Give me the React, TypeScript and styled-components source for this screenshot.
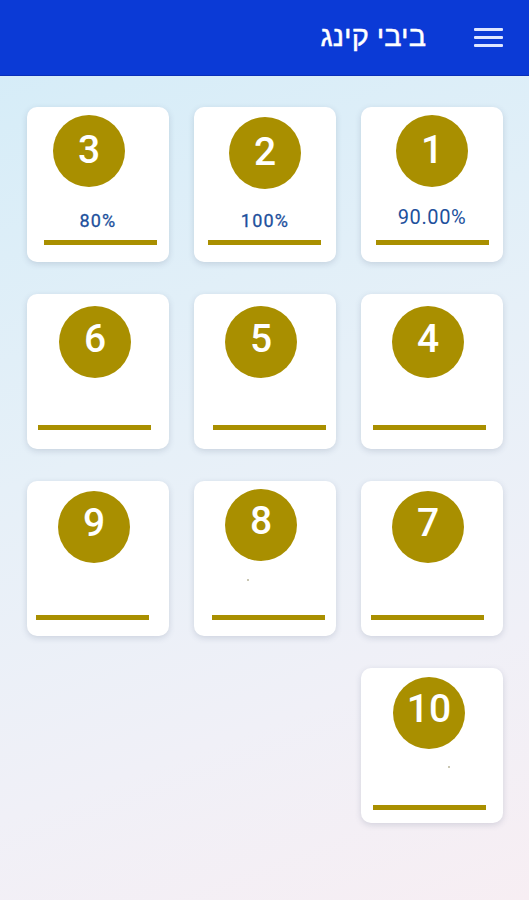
import React from "react";
import styled, { createGlobalStyle } from "styled-components";

type Level = {
  num: number;
  percent?: string;
  big?: boolean; // the first card shows its score larger
  dot?: number; // x of the stray dot inside the card, if any
  // small drift of circle / bar inside the card, as seen on the device
  cx: number;
  cy: number;
  bx: number;
  by: number;
  lift?: number;
};

const levels: Level[] = [
  { num: 1, percent: "90.00%", big: true, cx: 0, cy: 8, bx: 0, by: 133 },
  { num: 2, percent: "100%", cx: 0, cy: 10, bx: -1, by: 133 },
  { num: 3, percent: "80%", cx: -9, cy: 8, bx: 2, by: 133 },
  { num: 4, cx: -4, cy: 12, bx: -3, by: 131, lift: 2 },
  { num: 5, cx: -4, cy: 12, bx: 4, by: 131, lift: 2 },
  { num: 6, cx: -3, cy: 12, bx: -4, by: 131, lift: 2 },
  { num: 7, cx: -4, cy: 10, bx: -5, by: 134, lift: 3 },
  { num: 8, dot: 53, cx: -4, cy: 8, bx: 3, by: 134, lift: 3 },
  { num: 9, cx: -4, cy: 10, bx: -6, by: 134, lift: 3 },
  { num: 10, dot: 87, cx: -3, cy: 9, bx: -3, by: 137, lift: 3 },
];

const GlobalStyle = createGlobalStyle`
  html, body {
    margin: 0;
    padding: 0;
  }
  body {
    font-family: "Liberation Sans", "DejaVu Sans", sans-serif;
    background: #eef3f8;
  }
`;

const Page = styled.div`
  min-height: 900px;
  width: 529px;
  background: linear-gradient(160deg, #d3ecf8 0%, #e6f0f8 45%, #f0f0f7 75%, #f7eef3 100%);
`;

const Header = styled.header`
  height: 75px;
  background: #0b3ad6;
  border-bottom: 1px solid #0a2fb8;
  display: flex;
  align-items: center;
  justify-content: flex-end;
  gap: 48px;
  padding-right: 26px;
  direction: ltr;
`;

const Title = styled.h1`
  margin: 0 0 2px;
  font-family: "Liberation Sans", "DejaVu Sans", sans-serif;
  font-weight: normal;
  font-size: 29px;
  color: #ffffff;
  direction: rtl;
  -webkit-text-stroke: 0.4px #ffffff;
`;

const Burger = styled.div`
  width: 29px;
  display: flex;
  flex-direction: column;
  gap: 5px;
  margin-top: -1px;
`;

const BurgerLine = styled.span`
  display: block;
  height: 3px;
  background: #dfe6ff;
  border-radius: 1px;
`;

const Grid = styled.div`
  direction: rtl;
  display: grid;
  grid-template-columns: repeat(3, 142px);
  column-gap: 25px;
  row-gap: 32px;
  padding: 31px 26px 40px 27px;
`;

const Card = styled.div`
  position: relative;
  height: 155px;
  background: #ffffff;
  border-radius: 10px;
  box-shadow: 0 2px 6px rgba(60, 80, 110, 0.18);
  direction: ltr;
`;

const Circle = styled.div<{ $dx: number; $dy: number }>`
  position: absolute;
  left: calc(50% - 36px + ${(p) => p.$dx}px);
  top: ${(p) => p.$dy}px;
  width: 72px;
  height: 72px;
  border-radius: 50%;
  background: #a98f00;
  display: flex;
  align-items: center;
  justify-content: center;
`;

const Num = styled.span<{ $lift: number }>`
  color: #ffffff;
  font-family: Roboto, "Liberation Sans", sans-serif;
  font-weight: 500;
  font-size: 39px;
  line-height: 1;
  margin-top: ${(p) => -2 - p.$lift * 2}px;
`;

const Percent = styled.span<{ $big?: boolean }>`
  position: absolute;
  left: 0;
  right: 0;
  top: ${(p) => (p.$big ? 98 : 103)}px;
  text-align: center;
  font-family: Roboto, sans-serif;
  font-size: ${(p) => (p.$big ? 20 : 18)}px;
  font-weight: 400;
  color: #21509c;
  letter-spacing: ${(p) => (p.$big ? 0.6 : 1.2)}px;
  -webkit-text-stroke: ${(p) => (p.$big ? 0 : 0.3)}px #21509c;
`;

const Dot = styled.span<{ $x: number }>`
  position: absolute;
  left: ${(p) => p.$x}px;
  top: 98px;
  width: 2px;
  height: 2px;
  border-radius: 50%;
  background: #b9b59a;
`;

const Bar = styled.div<{ $dx: number; $dy: number }>`
  position: absolute;
  left: calc(50% - 56px + ${(p) => p.$dx}px);
  top: ${(p) => p.$dy}px;
  width: 113px;
  height: 5px;
  background: #a98f00;
`;

const LevelCard: React.FC<{ data: Level }> = ({ data }) => (
  <Card>
    <Circle $dx={data.cx} $dy={data.cy}>
      <Num $lift={data.lift ?? 0}>{data.num}</Num>
    </Circle>
    {data.percent && <Percent $big={data.big}>{data.percent}</Percent>}
    {data.dot !== undefined && <Dot $x={data.dot} />}
    <Bar $dx={data.bx} $dy={data.by} />
  </Card>
);

const App: React.FC = () => (
  <>
    <GlobalStyle />
    <Page>
      <Header>
        <Title>ביבי קינג</Title>
        <Burger>
          <BurgerLine />
          <BurgerLine />
          <BurgerLine />
        </Burger>
      </Header>
      <Grid>
        {levels.map((l) => (
          <LevelCard key={l.num} data={l} />
        ))}
      </Grid>
    </Page>
  </>
);

export default App;
